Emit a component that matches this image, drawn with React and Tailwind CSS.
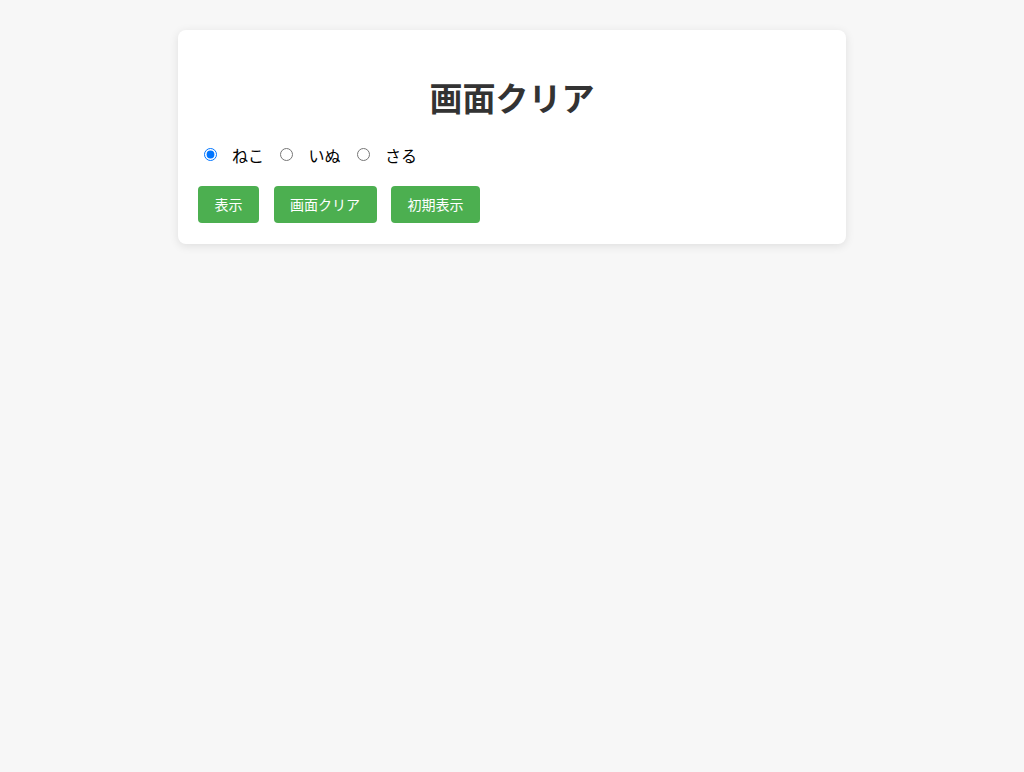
import React, { useState } from 'react';

const animals = [
  { value: 'cat', label: 'ねこ' },
  { value: 'dog', label: 'いぬ' },
  { value: 'monkey', label: 'さる' },
];

const buttons = ['表示', '画面クリア', '初期表示'];

export default function App() {
  const [selected, setSelected] = useState('cat');

  return (
    <div
      className="min-h-screen bg-[#f7f7f7] pt-[29.5px]"
      style={{ fontFamily: '"Noto Sans CJK JP", "Noto Sans", sans-serif' }}
    >
      <div className="mx-auto w-[668px] rounded-lg bg-white px-5 pt-[44px] pb-[21px] shadow-[0_2px_10px_rgba(0,0,0,0.1)]">
        <h1 className="text-center text-[33px] font-bold leading-[47px] text-[#333]">画面クリア</h1>

        {/* animal choice */}
        <div className="mt-[22.5px] flex h-[23px] items-center gap-4 pl-[5.5px] text-base text-black">
          {animals.map((a) => (
            <label key={a.value} className="flex items-center gap-[15.5px]">
              <input
                type="radio"
                name="animal"
                value={a.value}
                checked={selected === a.value}
                onChange={() => setSelected(a.value)}
                className="m-0 h-[13px] w-[13px]"
              />
              <span>{a.label}</span>
            </label>
          ))}
        </div>

        <div className="mt-5 flex gap-[14.5px]">
          {buttons.map((b) => (
            <button
              key={b}
              className="h-[36.5px] rounded bg-[#4caf50] px-[16.5px] text-sm leading-5 text-white"
            >
              {b}
            </button>
          ))}
        </div>
      </div>
    </div>
  );
}
